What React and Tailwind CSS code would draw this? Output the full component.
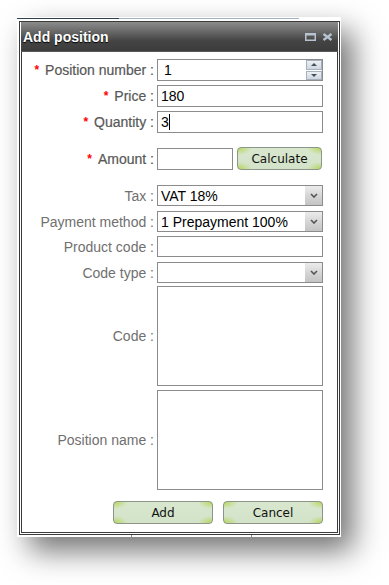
import React from "react";

const inputCls =
  "h-[22px] border border-[#8b8b8b] bg-white flex items-center pl-[3px] text-[14px] text-black leading-none";

function Label({ children, req }) {
  return (
    <div
      className={
        req
          ? "w-[132px] shrink-0 text-right text-[14px] leading-none text-[#585858] [-webkit-text-stroke:0.2px_#585858]"
          : "w-[132px] shrink-0 text-right text-[14px] leading-none text-[#707070]"
      }
    >
      {req && (
        <span className="font-bold text-[12px] text-[#ff0000] [-webkit-text-stroke:0px] mr-[6px] align-[1px]">*</span>
      )}
      {children} :
    </div>
  );
}

function Row({ label, req, className, children }) {
  return (
    <div className={"flex items-center " + (className || "")}>
      <Label req={req}>{label}</Label>
      <div className="ml-[3px] flex items-center">{children}</div>
    </div>
  );
}

function Chevron() {
  return (
    <svg width="8" height="5" viewBox="0 0 8 5">
      <path d="M1 1 L4 4 L7 1" fill="none" stroke="#555" strokeWidth="1.6" />
    </svg>
  );
}

function Select({ value }) {
  return (
    <div className="w-[166px] h-[21px] border border-[#8b8b8b] bg-white flex items-center text-[14px] text-black leading-none">
      <span className="flex-1 pl-[3px]">{value}</span>
      <span className="w-[17px] h-full flex items-center justify-center bg-[linear-gradient(#ececec,#d2d2d2_60%,#c4c4c4)]">
        <Chevron />
      </span>
    </div>
  );
}

const btnCls =
  "h-[23px] rounded-[4px] border border-[#8d9588] flex items-center justify-center text-[12px] text-[#111] font-['DejaVu_Sans',sans-serif] bg-[radial-gradient(ellipse_14px_7px_at_0_0,#b4d65a,transparent),radial-gradient(ellipse_14px_7px_at_100%_0,#b4d65a,transparent),radial-gradient(ellipse_14px_7px_at_0_100%,#b4d65a,transparent),radial-gradient(ellipse_14px_7px_at_100%_100%,#b4d65a,transparent),linear-gradient(#d8e7ce,#d3e3c9)]";

export default function App() {
  return (
    <div className="w-[389px] h-[585px] bg-white overflow-hidden font-['Liberation_Sans',Arial,sans-serif]">
      <div className="ml-[17px] mt-[17px] w-[324px] h-[520px] bg-white shadow-[12px_14px_28px_rgba(0,0,0,0.55)] pt-px flex flex-col">
        <div className="flex h-px">
          <div className="w-[102px] bg-[#33404f]" />
          <div className="w-[180px] bg-[#a3b0c2]" />
        </div>
        <div className="h-[2px]" />
        {/* dialog */}
        <div className="ml-[2px] w-[321px] h-[514px] border border-[#3a3a3a] px-px pb-px flex flex-col bg-white">
          <div className="h-[30px] flex items-center bg-[linear-gradient(#8c8c8c,#666_35%,#444_65%,#3c3c3c)] border-b border-[#5a5a5a]">
            <span className="pl-[2px] text-white font-bold text-[14px] leading-none [text-shadow:0_1px_1px_#000]">
              Add position
            </span>
            <div className="ml-auto flex items-center gap-[6px] pr-[5px]">
              <svg width="11" height="8" viewBox="0 0 11 8">
                <rect x="0.75" y="0.75" width="9.5" height="6.5" fill="none" stroke="#b7c3d0" strokeWidth="1.5" />
                <rect x="0" y="0" width="11" height="2.5" fill="#b7c3d0" />
              </svg>
              <svg width="11" height="8" viewBox="0 0 11 8">
                <path d="M1.5 1 L9.5 7 M9.5 1 L1.5 7" stroke="#b7c3d0" strokeWidth="2.2" />
              </svg>
            </div>
          </div>
          {/* body */}
          <div className="flex-1 border border-[#3a3a3a] border-t-0 pt-[7px] flex flex-col">
            <Row label="Position number" req>
              <div className={inputCls + " w-[166px] pl-0"}>
                <span className="flex-1 pl-[3px]">1</span>
                <div className="w-[16px] h-full flex flex-col gap-px bg-white">
                  <div className="flex-1 border border-[#a7b1bd] bg-[linear-gradient(#edf1f6,#cdd6e0)] flex items-center justify-center">
                    <svg width="6" height="3" viewBox="0 0 6 3"><path d="M0 3 L3 0 L6 3Z" fill="#4a4f57" /></svg>
                  </div>
                  <div className="flex-1 border border-[#a7b1bd] bg-[linear-gradient(#edf1f6,#cdd6e0)] flex items-center justify-center">
                    <svg width="6" height="3" viewBox="0 0 6 3"><path d="M0 0 L3 3 L6 0Z" fill="#4a4f57" /></svg>
                  </div>
                </div>
              </div>
            </Row>
            <Row label="Price" req className="mt-[4px]">
              <div className={inputCls + " w-[166px]"}>180</div>
            </Row>
            <Row label="Quantity" req className="mt-[4px]">
              <div className={inputCls + " w-[166px]"}>
                3<span className="w-px h-[16px] bg-black" />
              </div>
            </Row>
            <Row label="Amount" req className="mt-[14px]">
              <div className={inputCls + " w-[76px]"} />
              <button className={btnCls + " ml-[4px] w-[85px]"}>Calculate</button>
            </Row>
            <Row label="Tax" className="mt-[15px]">
              <Select value="VAT 18%" />
            </Row>
            <Row label="Payment method" className="mt-[5px]">
              <Select value="1 Prepayment 100%" />
            </Row>
            <Row label="Product code" className="mt-[4px]">
              <div className="w-[166px] h-[21px] border border-[#8b8b8b] bg-white" />
            </Row>
            <Row label="Code type" className="mt-[5px]">
              <Select value="" />
            </Row>
            <Row label="Code" className="mt-[3px]">
              <div className="w-[166px] h-[100px] border border-[#8b8b8b] bg-white" />
            </Row>
            <Row label="Position name" className="mt-[4px]">
              <div className="w-[166px] h-[100px] border border-[#8b8b8b] bg-white" />
            </Row>
            <div className="mt-[11px] ml-[91px] flex gap-[10px]">
              <button className={btnCls + " w-[100px]"}>Add</button>
              <button className={btnCls + " w-[100px]"}>Cancel</button>
            </div>
          </div>
        </div>
        <div className="h-[2px] flex">
          <div className="ml-[114px] w-px bg-[#8a8a8a]" />
          <div className="ml-[119px] w-px bg-[#8a8a8a]" />
        </div>
      </div>
    </div>
  );
}
